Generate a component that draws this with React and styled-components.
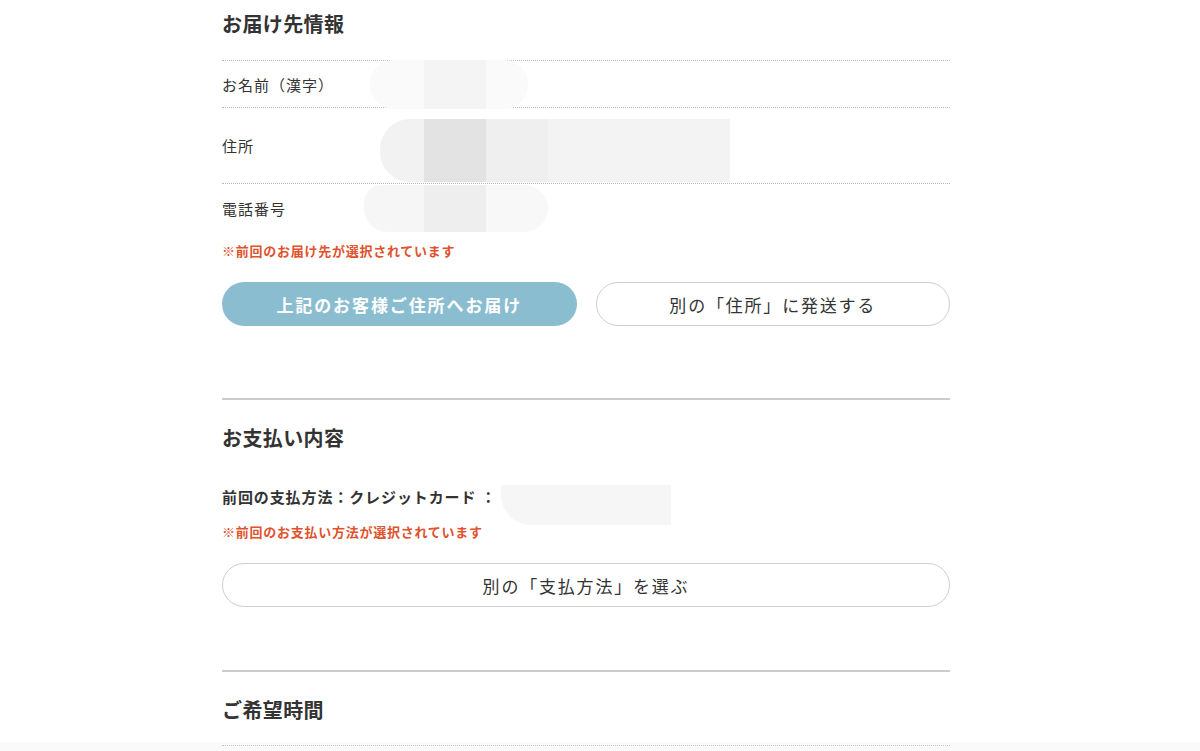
import React from 'react'
import styled, { createGlobalStyle } from 'styled-components'

const GlobalStyle = createGlobalStyle`
  body {
    margin: 0;
    background: #fff;
    color: #333;
    font-family: "Noto Sans CJK JP", "Noto Sans", sans-serif;
  }
`

const Page = styled.div`
  width: 1200px;
  height: 751px;
  overflow: hidden;
`

const Column = styled.div`
  width: 728px;
  margin-left: 222px;
`

const Heading = styled.h2`
  margin: ${props => props.top || 0}px 0 0;
  padding-top: ${props => props.pad || 0}px;
  font-size: 20px;
  line-height: 28px;
  font-weight: 700;
  letter-spacing: 0.4px;
  color: #333;
`

const Table = styled.div`
  margin-top: 22px;
  border-top: 1px dotted #b8b8b8;
`

const Row = styled.div`
  display: flex;
  align-items: center;
  height: ${props => props.h}px;
  border-bottom: ${props => props.last ? 'none' : '1px dotted #b8b8b8'};
`

const Label = styled.div`
  width: 148px;
  flex-shrink: 0;
  font-size: 15px;
  letter-spacing: 1px;
  color: #333;
`

const Value = styled.div`
  flex: 1;
  display: flex;
  align-items: center;
  height: 100%;
`

// light grey smudge that hides personal data
const Blob = styled.div`
  display: flex;
  flex-shrink: 0;
  height: ${props => props.h}px;
  margin-left: ${props => props.offset || 0}px;
  margin-top: ${props => props.dy || 0}px;
  border-radius: ${props => props.radius || '24px'};
  overflow: hidden;
`

const Seg = styled.div`
  height: 100%;
  background: ${props => props.bg};
`

const Note = styled.p`
  margin: ${props => props.top}px 0 0;
  font-size: 13px;
  line-height: 20px;
  font-weight: 700;
  letter-spacing: 0.75px;
  color: #e0522c;
`

const ButtonRow = styled.div`
  display: grid;
  grid-template-columns: ${props => props.single ? '1fr' : '1fr 1fr'};
  gap: 19px;
  margin-top: 21px;
`

const Button = styled.button`
  height: 44px;
  border-radius: 22px;
  font-family: inherit;
  font-size: 17px;
  letter-spacing: ${props => props.primary ? '1.9px' : '1.8px'};
  cursor: pointer;
  border: ${props => props.primary ? 'none' : '1px solid #cfcfcf'};
  background: ${props => props.primary ? '#8bbdd1' : '#fff'};
  color: ${props => props.primary ? '#fff' : '#333'};
  font-weight: ${props => props.primary ? 700 : 400};
`

const Separator = styled.hr`
  margin: ${props => props.top}px 0 0;
  border: none;
  height: 2px;
  background: #cccccc;
`

const PayLine = styled.div`
  display: flex;
  align-items: center;
  margin-top: 33px;
  height: 22px;
  font-size: 15px;
  font-weight: 700;
  letter-spacing: 0.9px;
  color: #333;
`

const BottomBand = styled.div`
  margin-top: 18px;
  padding-top: 3px;
  background: #fafafa;
  height: 20px;
`

const BandLine = styled.div`
  width: 728px;
  margin-left: 222px;
  border-top: 1px dotted #c4c4c4;
`

const rows = [
  { label: 'お名前（漢字）', h: 46, blob: { h: 49, offset: 0, segs: [['#fafafa', 54], ['#f4f4f4', 62], ['#fafafa', 42]] } },
  { label: '住所', h: 75, blob: { h: 63, offset: 10, dy: 10, radius: '30px 0 0 30px', segs: [['#f2f2f2', 44], ['#e3e3e3', 62], ['#efefef', 62], ['#f3f3f3', 182]] } },
  { label: '電話番号', h: 48, last: true, blob: { h: 47, offset: -6, radius: '18px 24px 24px 24px', segs: [['#f6f6f6', 60], ['#eeeeee', 62], ['#f8f8f8', 62]] } },
]

export default function App() {
  return (
    <Page>
      <GlobalStyle />
      <Column>
        <Heading pad={10}>お届け先情報</Heading>
        <Table>
          {rows.map(r => (
            <Row key={r.label} h={r.h} last={r.last}>
              <Label>{r.label}</Label>
              <Value>
                <Blob h={r.blob.h} offset={r.blob.offset} dy={r.blob.dy} radius={r.blob.radius}>
                  {r.blob.segs.map(([bg, w], i) => <Seg key={i} bg={bg} style={{ width: w }} />)}
                </Blob>
              </Value>
            </Row>
          ))}
        </Table>
        <Note top={9}>※前回のお届け先が選択されています</Note>
        <ButtonRow>
          <Button primary>上記のお客様ご住所へお届け</Button>
          <Button>別の「住所」に発送する</Button>
        </ButtonRow>

        <Separator top={72} />
        <Heading top={24}>お支払い内容</Heading>
        <PayLine>
          前回の支払方法：クレジットカード ：
          <Blob h={40} offset={4} dy={18} radius="0 0 0 30px">
            <Seg bg="#f6f6f6" style={{ width: 170 }} />
          </Blob>
        </PayLine>
        <Note top={15}>※前回のお支払い方法が選択されています</Note>
        <ButtonRow single>
          <Button>別の「支払方法」を選ぶ</Button>
        </ButtonRow>

        <Separator top={63} />
        <Heading top={24}>ご希望時間</Heading>
      </Column>
      <BottomBand>
        <BandLine />
      </BottomBand>
    </Page>
  )
}
